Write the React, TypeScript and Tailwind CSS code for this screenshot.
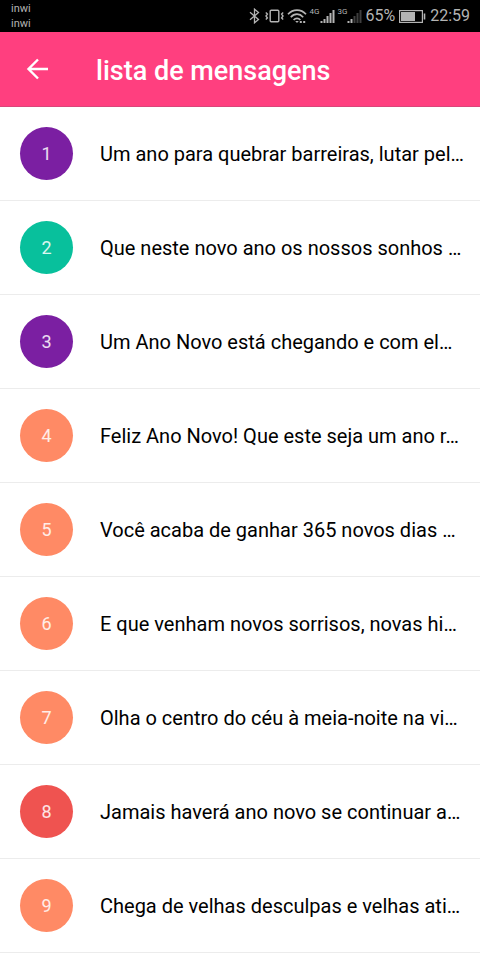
const messages = [
  { id: 1, color: "bg-[#7b1fa2]", text: "Um ano para quebrar barreiras, lutar pel…" },
  { id: 2, color: "bg-[#08c09c]", text: "Que neste novo ano os nossos sonhos …" },
  { id: 3, color: "bg-[#7b1fa2]", text: "Um Ano Novo está chegando e com el…" },
  { id: 4, color: "bg-[#ff8a65]", text: "Feliz Ano Novo! Que este seja um ano r…" },
  { id: 5, color: "bg-[#ff8a65]", text: "Você acaba de ganhar 365 novos dias …" },
  { id: 6, color: "bg-[#ff8a65]", text: "E que venham novos sorrisos, novas hi…" },
  { id: 7, color: "bg-[#ff8a65]", text: "Olha o centro do céu à meia-noite na vi…" },
  { id: 8, color: "bg-[#ef5350]", text: "Jamais haverá ano novo se continuar a…" },
  { id: 9, color: "bg-[#ff8a65]", text: "Chega de velhas desculpas e velhas ati…" },
];

function BluetoothIcon() {
  return (
    <svg width="13" height="16" viewBox="0 0 13 16" fill="none" stroke="currentColor" strokeWidth="1.3">
      <path d="M1 4.3 9.5 11.5 5.5 14.8V1.2L9.5 4.5 1 11.7" />
    </svg>
  );
}

function VibrateIcon() {
  return (
    <svg width="19" height="16" viewBox="0 0 19 16" fill="none" stroke="currentColor" strokeWidth="1.4">
      <rect x="5.2" y="2.2" width="8.6" height="11.6" rx="1" />
      <path d="M0.8 4.5 2.4 6 1 8 2.4 10 0.8 11.5M18.2 4.5 16.6 6 18 8 16.6 10 18.2 11.5" />
    </svg>
  );
}

function WifiIcon() {
  return (
    <svg width="20" height="16" viewBox="0 0 20 16" fill="none" stroke="currentColor" strokeWidth="1.7">
      <path d="M1 6.2C6 0.7 14 0.7 19 6.2M3.8 9.2C7.4 5.2 12.6 5.2 16.2 9.2M6.6 12C8.6 9.7 11.4 9.7 13.4 12" />
      <path d="M8.2 13 10 15 11.8 13Z" fill="currentColor" stroke="none" />
      <path d="M12.8 14h2M16.2 14h2" strokeWidth="2" />
    </svg>
  );
}

function SignalIcon({ label, level }: { label: string; level: number }) {
  return (
    <span className="flex items-center">
      <span className="self-start text-[8px] leading-[8px]">{label}</span>
      <svg width="15" height="16" viewBox="0 0 15 16" fill="currentColor">
        {[2, 4, 7, 10, 13].map((height, i) => (
          <rect
            key={height}
            x={i * 3 + 0.5}
            y={15 - height}
            width="2"
            height={height}
            opacity={i < level ? 1 : 0.35}
          />
        ))}
      </svg>
    </span>
  );
}

function BatteryIcon() {
  return (
    <svg width="27" height="16" viewBox="0 0 27 16" fill="none" stroke="currentColor">
      <rect x="0.6" y="2.6" width="22.8" height="11.8" strokeWidth="1.2" />
      <rect x="2" y="4" width="14" height="9" fill="currentColor" stroke="none" />
      <path d="M25.5 5.5v6" strokeWidth="1.6" />
    </svg>
  );
}

function StatusBar() {
  return (
    <div className="flex h-8 items-center justify-between bg-black pr-[10px] pl-[11px] text-[#b4b4b4]">
      <div className="text-[11px] leading-[15px]">
        <p>inwi</p>
        <p>inwi</p>
      </div>
      <div className="flex items-center gap-[3px] text-base leading-4">
        <BluetoothIcon />
        <VibrateIcon />
        <WifiIcon />
        <SignalIcon label="4G" level={5} />
        <SignalIcon label="3G" level={2} />
        <div className="flex items-center gap-1">
          <span>65%</span>
          <BatteryIcon />
          <span>22:59</span>
        </div>
      </div>
    </div>
  );
}

export default function App() {
  return (
    <div className="min-h-screen bg-white font-[Roboto,sans-serif] text-black">
      <StatusBar />

      <header className="flex h-[75px] items-center border-b border-[#d9467a] bg-[#ff3f7f] pt-1 pl-[26px] text-white">
        <button type="button" aria-label="Voltar" className="mr-[46px] pb-1">
          <svg width="24" height="24" viewBox="0 0 24 24" fill="none" stroke="currentColor" strokeWidth="2.4">
            <path d="M22 12H2.5M12 2.5 2.5 12 12 21.5" />
          </svg>
        </button>
        <h1 className="text-[27px] leading-8 font-medium">lista de mensagens</h1>
      </header>

      <ul>
        {messages.map((message) => (
          <li key={message.id} className="border-b border-[#ececec]">
            <a href={`#${message.id}`} className="flex h-[93px] items-center gap-[27px] px-5">
              <span
                className={`flex size-[53px] shrink-0 items-center justify-center rounded-full text-lg text-white/85 ${message.color}`}
              >
                {message.id}
              </span>
              <span className="min-w-0 flex-1 whitespace-nowrap text-xl">{message.text}</span>
            </a>
          </li>
        ))}
      </ul>
    </div>
  );
}
